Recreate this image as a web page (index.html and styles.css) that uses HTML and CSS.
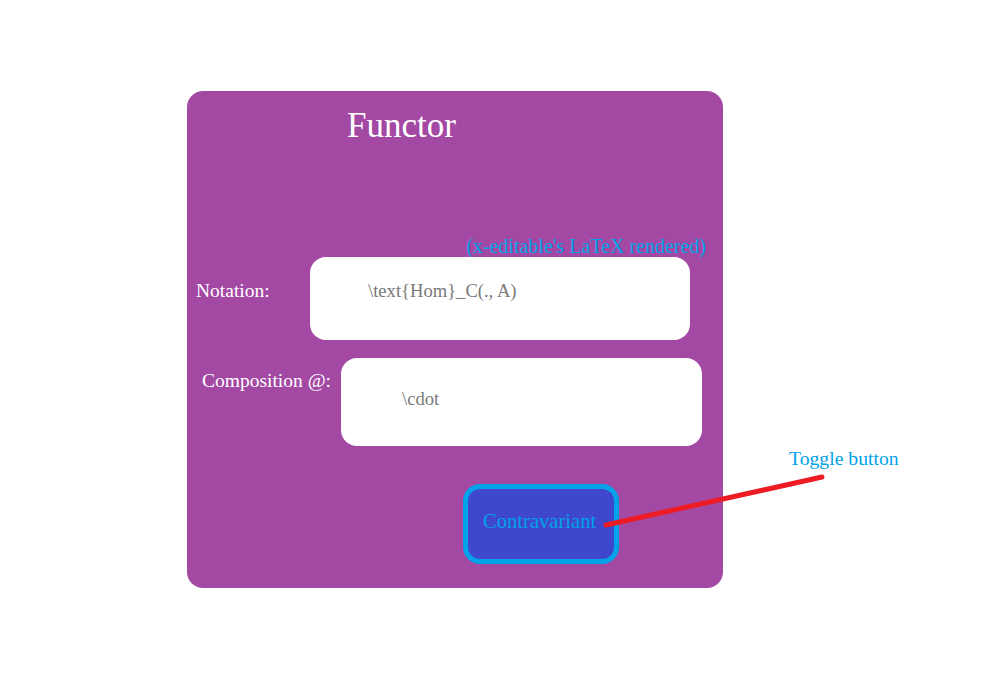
FILE: index.html
```html
<!DOCTYPE html>
<html>
<head>
<meta charset="utf-8">
<link rel="stylesheet" href="styles.css">
</head>
<body>
<div class="page">
  <div class="card">
    <div class="title">Functor</div>
    <div class="note">(x-editable's LaTeX rendered)</div>
    <div class="row row-notation">
      <div class="label label-notation">Notation:</div>
      <div class="field field-notation"><span class="code">\text{Hom}_C(., A)</span></div>
    </div>
    <div class="row row-comp">
      <div class="label label-comp">Composition @:</div>
      <div class="field field-comp"><span class="code">\cdot</span></div>
    </div>
    <div class="row row-button">
      <div class="toggle">Contravariant</div>
    </div>
  </div>
  <svg class="arrow" width="989" height="673" viewBox="0 0 989 673">
    <line x1="606" y1="525" x2="822" y2="477" stroke="#ed1c24" stroke-width="5" stroke-linecap="round"/>
  </svg>
  <div class="annotation">Toggle button</div>
</div>
</body>
</html>
```

FILE: styles.css
```css
html, body {
  margin: 0;
  padding: 0;
  background: #ffffff;
}
body {
  font-family: "Liberation Serif", "Times New Roman", serif;
}
.page {
  position: relative;
  width: 989px;
  height: 673px;
  padding-top: 91px;
  padding-left: 187px;
  box-sizing: border-box;
}
.card {
  width: 536px;
  height: 497px;
  background: #a349a4;
  border-radius: 16px;
  display: flex;
  flex-direction: column;
  box-sizing: border-box;
  padding-top: 15px;
}
.title {
  color: #ffffff;
  font-size: 35px;
  line-height: 40px;
  padding-left: 160px;
}
.note {
  color: #00a2e8;
  font-size: 20px;
  line-height: 22px;
  text-align: right;
  padding-right: 17px;
  margin-top: 88px;
  padding-top: 1px;
}
.row {
  display: flex;
  align-items: flex-start;
}
.label {
  color: #ffffff;
  font-size: 19.5px;
  line-height: 24px;
}
.label-notation {
  padding-left: 9px;
  width: 114px;
  margin-top: 22px;
}
.label-comp {
  padding-left: 15px;
  width: 139px;
  margin-top: 11px;
  white-space: nowrap;
}
.field {
  background: #ffffff;
  border-radius: 16px;
  box-sizing: border-box;
}
.code {
  color: #7a7a7a;
  font-size: 18.6px;
  line-height: 24px;
}
.field-notation {
  width: 380px;
  height: 83px;
  padding-left: 58px;
  padding-top: 22px;
}
.row-comp {
  margin-top: 18px;
}
.field-comp {
  width: 361px;
  height: 88px;
  padding-left: 61px;
  padding-top: 29px;
}
.row-button {
  margin-top: 38px;
  padding-left: 276px;
}
.toggle {
  width: 156px;
  height: 80px;
  box-sizing: border-box;
  border: 5px solid #00a2e8;
  border-radius: 17px;
  background: #3f48cc;
  color: #00a2e8;
  font-size: 20.6px;
  line-height: 24px;
  padding-left: 15px;
  padding-top: 20px;
  white-space: nowrap;
}
.arrow {
  position: absolute;
  left: 0;
  top: 0;
  pointer-events: none;
}
.annotation {
  position: absolute;
  left: 789px;
  top: 446px;
  color: #00a2e8;
  font-size: 19.7px;
  line-height: 24px;
  white-space: nowrap;
}
```
